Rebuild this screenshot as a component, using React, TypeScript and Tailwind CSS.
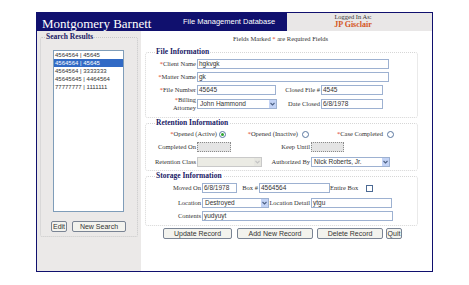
import React from "react";

const SERIF = "font-['Liberation_Serif',serif]";
const SANS = "font-['Liberation_Sans',Arial,sans-serif]";

function Req() {
  return <span className="text-[#e0401c]">*</span>;
}

function Label({ className, children }: { className: string; children: React.ReactNode }) {
  return (
    <div
      className={`${SERIF} text-[6.5px] leading-[8px] text-[#333] text-right pr-[1px] shrink-0 whitespace-nowrap ${className}`}
    >
      {children}
    </div>
  );
}

function Input({ className, value, disabled }: { className: string; value?: string; disabled?: boolean }) {
  return (
    <div
      className={`h-[10px] shrink-0 border ${
        disabled ? "border-dotted border-[#8a8a8a] bg-[#e4e4e4]" : "border-[#9db1d1] bg-white"
      } ${SANS} text-[6.5px] leading-[8px] text-[#333] pl-[1px] overflow-hidden whitespace-nowrap ${className}`}
    >
      {value}
    </div>
  );
}

function Select({ className, value, disabled }: { className: string; value?: string; disabled?: boolean }) {
  return (
    <div
      className={`h-[10px] shrink-0 border ${disabled ? "border-[#c9c9c9] bg-[#ebebe4]" : "border-[#9db1d1] bg-white"} flex items-stretch ${className}`}
    >
      <div className={`flex-1 ${SANS} text-[6.5px] leading-[8px] text-[#333] pl-[2px] overflow-hidden whitespace-nowrap`}>
        {value}
      </div>
      <div className={`w-[7px] flex items-center justify-center ${disabled ? "bg-[#e6e6e0]" : "bg-[#c3d3f5]"}`}>
        <svg width="5" height="4" viewBox="0 0 5 4">
          <path d="M0.5 1 L2.5 3 L4.5 1" stroke={disabled ? "#c4c4c4" : "#4d6185"} fill="none" strokeWidth="1.1" />
        </svg>
      </div>
    </div>
  );
}

function Radio({ checked }: { checked?: boolean }) {
  return (
    <div className="w-[7px] h-[7px] rounded-full border border-[#5a77a0] bg-white flex items-center justify-center shrink-0">
      {checked && <div className="w-[3px] h-[3px] rounded-full bg-[#2da52d]" />}
    </div>
  );
}

function Btn({ className, children }: { className: string; children: React.ReactNode }) {
  return (
    <div
      className={`h-[11px] border border-[#7a8494] rounded-[2px] bg-[#f3f3ee] flex items-center justify-center ${SANS} text-[7px] text-[#333] leading-none shrink-0 ${className}`}
    >
      {children}
    </div>
  );
}

function Legend({ children, className }: { children: React.ReactNode; className: string }) {
  return (
    <legend className={`${SERIF} text-[7.5px] font-bold leading-[10px] text-[#1a1a66] px-[1px] ${className}`}>
      {children}
    </legend>
  );
}

const items = ["4564564 | 45645", "4564564 | 45645", "4564564 | 3333333", "45645645 | 4464564", "77777777 | 1111111"];

export default function App() {
  return (
    <div className="w-[469px] h-[285px] bg-white pt-[12px] pl-[36px]">
      <div className="w-[397px] h-[260px] border border-[#10106e] flex flex-col">
        {/* Header */}
        <div className="flex h-[18px] shrink-0">
          <div className="w-[250px] bg-[#10106e] flex items-center">
            <div className="w-[146px] shrink-0 pl-[5px]">
              <span className={`${SERIF} text-[13px] text-white leading-none`}>Montgomery Barnett</span>
            </div>
            <span className={`${SANS} text-[7.5px] text-white leading-none`}>File Management Database</span>
          </div>
          <div className="flex-1 bg-[#e9e7e7] flex flex-col items-center pr-[13px]">
            <div className={`${SERIF} text-[6.5px] leading-[7px] text-[#333]`}>Logged In As:</div>
            <div className={`${SERIF} text-[8px] font-bold leading-[9px] text-[#d4561f]`}>JP Gisclair</div>
          </div>
        </div>

        {/* Body */}
        <div className="flex flex-1">
          {/* Sidebar */}
          <div className="w-[104px] shrink-0 bg-[#ebe9e8] pt-[1px] pl-[3px]">
            <fieldset className="w-[98px] h-[205px] border border-dotted border-[#c8c8c8] rounded-[2px]">
              <Legend className="ml-[4px]">Search Results</Legend>
              <div className="ml-[12px] mt-[8px] w-[71px] h-[162px] border border-[#7f9db9] bg-white">
                {items.map((t, i) => (
                  <div
                    key={i}
                    className={`h-[8px] leading-[8px] pl-[1px] text-[6px] whitespace-nowrap ${SANS} ${
                      i === 1 ? "bg-[#316ac5] text-white" : "text-[#333]"
                    }`}
                  >
                    {t}
                  </div>
                ))}
              </div>
              <div className="flex ml-[10px] mt-[9px] gap-[5px]">
                <Btn className="w-[16px] border-[#3c6fd1]">Edit</Btn>
                <Btn className="w-[54px]">New Search</Btn>
              </div>
            </fieldset>
          </div>

          {/* Main */}
          <div className="flex-1 bg-white pt-[4px]">
            <div className={`${SERIF} text-[6.5px] leading-[8px] text-[#333] pl-[92px] whitespace-nowrap`}>
              Fields Marked <Req /> are Required Fields
            </div>

            {/* File Information */}
            <fieldset className="ml-[4px] mt-[4px] w-[273px] border border-dotted border-[#d6d6d6] rounded-[3px] pb-[6px]">
              <Legend className="ml-[9px]">File Information</Legend>
              <div className="flex items-center mt-[2px]">
                <Label className="w-[51px]">
                  <Req />Client Name
                </Label>
                <Input className="w-[192px]" value="hgkvgk" />
              </div>
              <div className="flex items-center mt-[3px]">
                <Label className="w-[51px]">
                  <Req />Matter Name
                </Label>
                <Input className="w-[192px]" value="gk" />
              </div>
              <div className="flex items-center mt-[3px]">
                <Label className="w-[51px]">
                  <Req />File Number
                </Label>
                <Input className="w-[79px]" value="45645" />
                <Label className="w-[45px]">Closed File #</Label>
                <Input className="w-[62px]" value="4545" />
              </div>
              <div className="flex items-center mt-[2px] h-[14px]">
                <Label className="w-[51px] leading-[7px]">
                  <Req />Billing
                  <br />
                  Attorney
                </Label>
                <Select className="w-[80px]" value="John Hammond" />
                <Label className="w-[44px]">Date Closed</Label>
                <Input className="w-[62px]" value="6/8/1978" />
              </div>
            </fieldset>

            {/* Retention Information */}
            <fieldset className="ml-[4px] w-[273px] border border-dotted border-[#d6d6d6] rounded-[3px] pb-[3px]">
              <Legend className="ml-[9px]">Retention Information</Legend>
              <div className="flex items-center h-[10px] mt-[1px]">
                <Label className="w-[73px] pr-[2px]">
                  <Req />Opened (Active)
                </Label>
                <Radio checked />
                <Label className="w-[76px] pr-[4px]">
                  <Req />Opened (Inactive)
                </Label>
                <Radio />
                <Label className="w-[78px] pr-[4px]">
                  <Req />Case Completed
                </Label>
                <Radio />
              </div>
              <div className="flex items-center h-[10px] mt-[3px]">
                <Label className="w-[51px]">Completed On</Label>
                <Input className="w-[34px] h-[9px]" disabled />
                <Label className="w-[80px]">Keep Until</Label>
                <Input className="w-[33px] h-[9px]" disabled />
              </div>
              <div className="flex items-center mt-[5px]">
                <Label className="w-[51px]">Retention Class</Label>
                <Select className="w-[65px]" disabled />
                <Label className="w-[49px]">Authorized By</Label>
                <Select className="w-[79px]" value="Nick Roberts, Jr." />
              </div>
            </fieldset>

            {/* Storage Information */}
            <fieldset className="ml-[4px] w-[273px] border border-dotted border-[#d6d6d6] rounded-[3px] pb-[4px]">
              <Legend className="ml-[9px]">Storage Information</Legend>
              <div className="flex items-center mt-[2px]">
                <Label className="w-[56px]">Moved On</Label>
                <Input className="w-[35px]" value="6/8/1978" />
                <Label className="w-[22px]">Box #</Label>
                <Input className="w-[71px]" value="4564564" />
                <Label className="w-[30px] pr-[2px]">Entire Box</Label>
                <div className="ml-[6px] w-[7px] h-[7px] border border-[#4c6a94] bg-white shrink-0" />
              </div>
              <div className="flex items-center mt-[5px]">
                <Label className="w-[56px]">Location</Label>
                <Select className="w-[67px]" value="Destroyed" />
                <Label className="w-[42px]">Location Detail</Label>
                <Input className="w-[81px]" value="ytgu" />
              </div>
              <div className="flex items-center mt-[3px]">
                <Label className="w-[56px]">Contents</Label>
                <Input className="w-[191px]" value="yudyuyt" />
              </div>
            </fieldset>

            {/* Buttons */}
            <div className="flex ml-[22px] mt-[2px]">
              <Btn className="w-[69px]">Update Record</Btn>
              <Btn className="w-[76px] ml-[5px]">Add New Record</Btn>
              <Btn className="w-[66px] ml-[4px]">Delete Record</Btn>
              <Btn className="w-[16px] ml-[3px]">Quit</Btn>
            </div>
          </div>
        </div>
      </div>
    </div>
  );
}
